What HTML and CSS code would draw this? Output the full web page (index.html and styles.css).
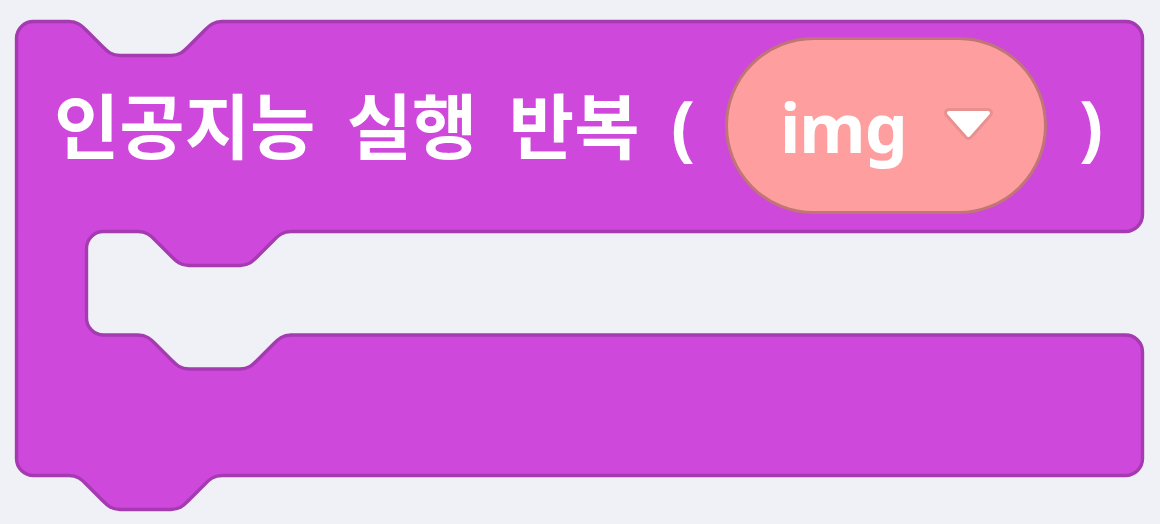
FILE: index.html
```html
<!DOCTYPE html>
<html lang="ko">
<head>
<meta charset="utf-8">
<link rel="stylesheet" href="styles.css">
</head>
<body>
<div class="stage">
  <svg class="block-shape" width="1160" height="524" viewBox="0 0 1160 524">
    <path class="block-path" d="M16.5,38.5 a17,17 0 0 1 17,-17 H69
      c8.5,0 12.75,4.25 17,8.5 l17,17 c4.25,4.25 8.5,8.5 17,8.5 h51 c8.5,0 12.75,-4.25 17,-8.5 l17,-17 c4.25,-4.25 8.5,-8.5 17,-8.5
      H1125.5 a17,17 0 0 1 17,17 V214.5 a17,17 0 0 1 -17,17 H291
      c-8.5,0 -12.75,4.25 -17,8.5 l-17,17 c-4.25,4.25 -8.5,8.5 -17,8.5 h-51 c-8.5,0 -12.75,-4.25 -17,-8.5 l-17,-17 c-4.25,-4.25 -8.5,-8.5 -17,-8.5
      H103.5 a17,17 0 0 0 -17,17 V318 a17,17 0 0 0 17,17 H138
      c8.5,0 12.75,4.25 17,8.5 l17,17 c4.25,4.25 8.5,8.5 17,8.5 h51 c8.5,0 12.75,-4.25 17,-8.5 l17,-17 c4.25,-4.25 8.5,-8.5 17,-8.5
      H1125.5 a17,17 0 0 1 17,17 V458.5 a17,17 0 0 1 -17,17 H222
      c-8.5,0 -12.75,4.25 -17,8.5 l-17,17 c-4.25,4.25 -8.5,8.5 -17,8.5 h-51 c-8.5,0 -12.75,-4.25 -17,-8.5 l-17,-17 c-4.25,-4.25 -8.5,-8.5 -17,-8.5
      H33.5 a17,17 0 0 1 -17,-17 Z"/>
  </svg>
  <div class="block-row">
    <span class="label">인공지능 실행 반복 (</span>
    <div class="pill">
      <span class="pill-text">img</span>
      <svg class="arrow" width="52" height="36" viewBox="0 0 52 36">
        <path class="arrow-halo" d="M7,7 L46,7 L26.5,29 Z"/>
        <path class="arrow-fill" d="M7,7 L46,7 L26.5,29 Z"/>
      </svg>
    </div>
    <span class="label paren">)</span>
  </div>
</div>
</body>
</html>
```
FILE: styles.css
```css
html, body {
  margin: 0;
  padding: 0;
}
body {
  background: #f0f0f7;
  font-family: "Noto Sans", "Noto Sans CJK KR", sans-serif;
}
.stage {
  position: relative;
  width: 1160px;
  height: 524px;
  overflow: hidden;
}
.block-shape {
  position: absolute;
  left: 0;
  top: 0;
}
.block-path {
  fill: #cf48dc;
  stroke: #a43bb1;
  stroke-width: 3.4;
  stroke-linejoin: round;
}
.block-row {
  position: relative;
  display: flex;
  align-items: center;
  padding: 37px 0 0 54px;
}
.label {
  color: #ffffff;
  font-weight: 700;
  font-size: 71px;
  line-height: 1;
  white-space: pre;
  word-spacing: 13px;
}
.pill {
  box-sizing: border-box;
  width: 322px;
  height: 177px;
  margin-left: 30px;
  border: 3px solid #c07676;
  border-radius: 89px;
  background: #ff9e9e;
  display: flex;
  align-items: center;
  padding-left: 52px;
}
.pill-text {
  color: #ffffff;
  font-weight: 700;
  font-size: 68px;
  letter-spacing: -1px;
  line-height: 1;
  margin-top: 2px;
}
.arrow {
  margin-left: 35px;
  margin-top: -4px;
}
.arrow-halo {
  fill: #e99191;
  stroke: #e99191;
  stroke-width: 10;
  stroke-linejoin: round;
}
.arrow-fill {
  fill: #ffffff;
  stroke: #ffffff;
  stroke-width: 4;
  stroke-linejoin: round;
}
.paren {
  margin-left: 32px;
}
```
